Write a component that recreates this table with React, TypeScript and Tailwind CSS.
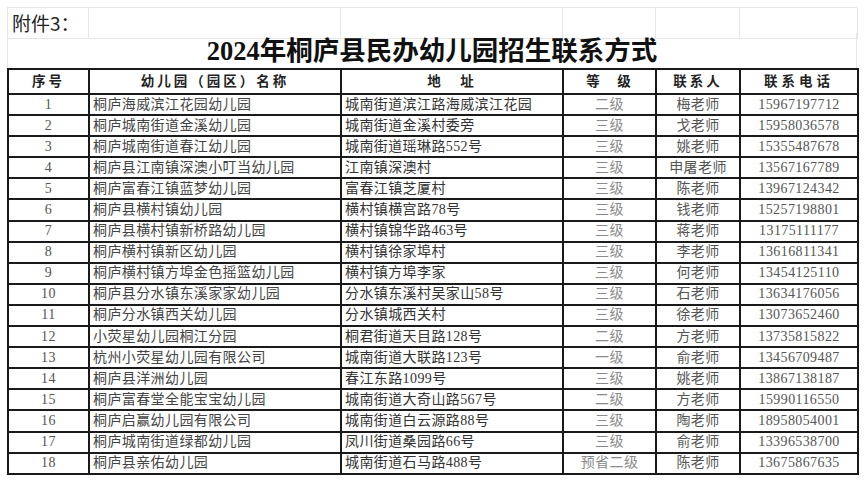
import React from 'react';

type Row = [string, string, string, string, string, string];

const rows: Row[] = [
  ['1', '桐庐海威滨江花园幼儿园', '城南街道滨江路海威滨江花园', '二级', '梅老师', '15967197712'],
  ['2', '桐庐城南街道金溪幼儿园', '城南街道金溪村委旁', '三级', '戈老师', '15958036578'],
  ['3', '桐庐城南街道春江幼儿园', '城南街道瑶琳路552号', '三级', '姚老师', '15355487678'],
  ['4', '桐庐县江南镇深澳小叮当幼儿园', '江南镇深澳村', '三级', '申屠老师', '13567167789'],
  ['5', '桐庐富春江镇蓝梦幼儿园', '富春江镇芝厦村', '三级', '陈老师', '13967124342'],
  ['6', '桐庐县横村镇幼儿园', '横村镇横宫路78号', '三级', '钱老师', '15257198801'],
  ['7', '桐庐县横村镇新桥路幼儿园', '横村镇锦华路463号', '三级', '蒋老师', '13175111177'],
  ['8', '桐庐横村镇新区幼儿园', '横村镇徐家埠村', '三级', '李老师', '13616811341'],
  ['9', '桐庐横村镇方埠金色摇篮幼儿园', '横村镇方埠李家', '三级', '何老师', '13454125110'],
  ['10', '桐庐县分水镇东溪家家幼儿园', '分水镇东溪村吴家山58号', '三级', '石老师', '13634176056'],
  ['11', '桐庐分水镇西关幼儿园', '分水镇城西关村', '三级', '徐老师', '13073652460'],
  ['12', '小荧星幼儿园桐江分园', '桐君街道天目路128号', '二级', '方老师', '13735815822'],
  ['13', '杭州小荧星幼儿园有限公司', '城南街道大联路123号', '一级', '俞老师', '13456709487'],
  ['14', '桐庐县洋洲幼儿园', '春江东路1099号', '三级', '姚老师', '13867138187'],
  ['15', '桐庐富春堂全能宝宝幼儿园', '城南街道大奇山路567号', '二级', '方老师', '15990116550'],
  ['16', '桐庐启赢幼儿园有限公司', '城南街道白云源路88号', '三级', '陶老师', '18958054001'],
  ['17', '桐庐城南街道绿都幼儿园', '凤川街道桑园路66号', '三级', '俞老师', '13396538700'],
  ['18', '桐庐县亲佑幼儿园', '城南街道石马路488号', '预省二级', '陈老师', '13675867635'],
];

const serif = { fontFamily: '"Liberation Serif", "Noto Sans CJK SC", serif' };

export default function App() {
  const cell = 'border-2 border-[#1a1a1a] p-0 leading-none';
  return (
    <div className="w-[864px] h-[483px] bg-white pt-[7px] pl-[7px] overflow-hidden" style={serif}>
      <div className="w-[850px]">
        {/* 附件 row */}
        <div className="grid grid-cols-[81px_252px_222px_93px_84px_118px] h-[26px] border-t border-l border-[#e6e6e6]">
          <div className="border-r border-b border-[#e6e6e6] flex items-center pl-[4px] pt-[1px] text-[19px] text-[#222]" style={{ fontFamily: '"Noto Sans CJK SC", sans-serif' }}>
            附件3：
          </div>
          <div className="border-r border-b border-[#e6e6e6]" />
          <div className="border-r border-b border-[#e6e6e6]" />
          <div className="border-r border-b border-[#e6e6e6]" />
          <div className="border-r border-b border-[#e6e6e6]" />
          <div className="border-r border-b border-[#e6e6e6]" />
        </div>
        {/* title row */}
        <div className="h-[35px] border-l border-r border-[#e6e6e6] flex items-end justify-center pb-[4px]">
          <span className="text-[26.5px] font-bold text-[#111] leading-none">2024年桐庐县民办幼儿园招生联系方式</span>
        </div>
        <table className="table-fixed border-collapse w-[850px]">
          <colgroup>
            <col className="w-[81px]" />
            <col className="w-[252px]" />
            <col className="w-[222px]" />
            <col className="w-[93px]" />
            <col className="w-[84px]" />
            <col className="w-[118px]" />
          </colgroup>
          <thead>
            <tr className="h-[25px] text-[13.5px] font-bold text-[#222]">
              <th className={cell}><span className="tracking-[3px]">序号</span></th>
              <th className={cell}><span className="tracking-[3px]">幼儿园（园区）名称</span></th>
              <th className={cell}><span className="tracking-[3px]">地　址</span></th>
              <th className={cell}><span className="tracking-[2px]">等　级</span></th>
              <th className={cell}><span className="tracking-[3px]">联系人</span></th>
              <th className={cell}><span className="tracking-[4px]">联系电话</span></th>
            </tr>
          </thead>
          <tbody>
            {rows.map((r) => (
              <tr key={r[0]} className="h-[21.1px] text-[14px] tracking-[0.4px]">
                <td className={`${cell} text-center text-[#555]`}>{r[0]}</td>
                <td className={`${cell} pl-[3px] text-[#444]`}>{r[1]}</td>
                <td className={`${cell} pl-[3px] text-[#333]`}>{r[2]}</td>
                <td className={`${cell} text-center text-[#8a8a8a]`}>{r[3]}</td>
                <td className={`${cell} text-center text-[#555]`}>{r[4]}</td>
                <td className={`${cell} text-center text-[#555]`}>{r[5]}</td>
              </tr>
            ))}
          </tbody>
        </table>
      </div>
    </div>
  );
}
